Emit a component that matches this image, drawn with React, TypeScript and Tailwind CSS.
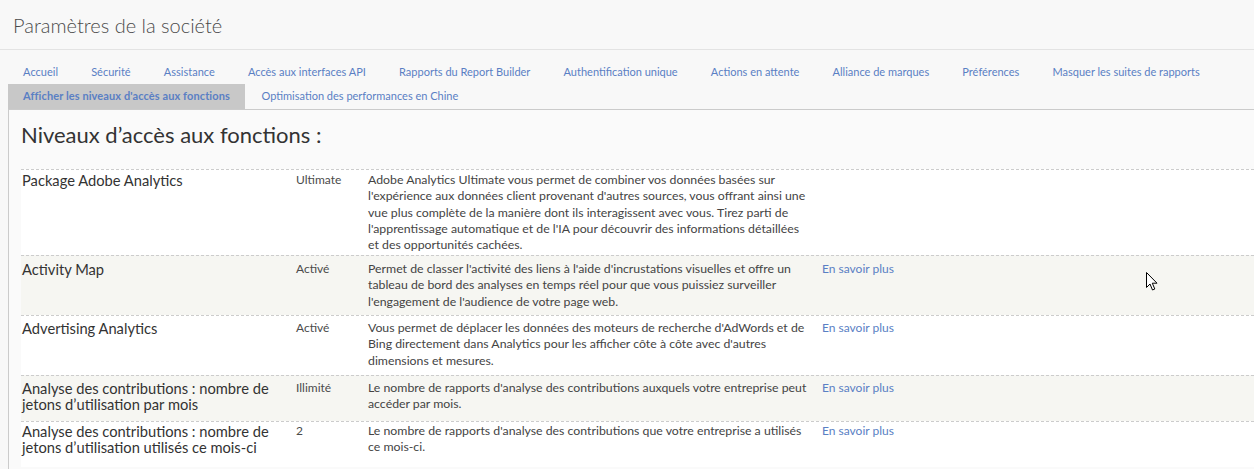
import React from "react";

const tabsTop = [
  "Accueil",
  "Sécurité",
  "Assistance",
  "Accès aux interfaces API",
  "Rapports du Report Builder",
  "Authentification unique",
  "Actions en attente",
  "Alliance de marques",
  "Préférences",
  "Masquer les suites de rapports",
];

const rows = [
  {
    name: "Package Adobe Analytics",
    value: "Ultimate",
    desc: [
      "Adobe Analytics Ultimate vous permet de combiner vos données basées sur",
      "l'expérience aux données client provenant d'autres sources, vous offrant ainsi une",
      "vue plus complète de la manière dont ils interagissent avec vous. Tirez parti de",
      "l'apprentissage automatique et de l'IA pour découvrir des informations détaillées",
      "et des opportunités cachées.",
    ],
    link: false,
    h: "h-[86px] pt-[2px]",
  },
  {
    name: "Activity Map",
    value: "Activé",
    desc: [
      "Permet de classer l'activité des liens à l'aide d'incrustations visuelles et offre un",
      "tableau de bord des analyses en temps réel pour que vous puissiez surveiller",
      "l'engagement de l'audience de votre page web.",
    ],
    link: true,
    h: "h-[60px] pt-[5px]",
  },
  {
    name: "Advertising Analytics",
    value: "Activé",
    desc: [
      "Vous permet de déplacer les données des moteurs de recherche d'AdWords et de",
      "Bing directement dans Analytics pour les afficher côte à côte avec d'autres",
      "dimensions et mesures.",
    ],
    link: true,
    h: "h-[60px] pt-[4px]",
  },
  {
    name: "Analyse des contributions : nombre de jetons d’utilisation par mois",
    value: "Illimité",
    desc: [
      "Le nombre de rapports d'analyse des contributions auxquels votre entreprise peut",
      "accéder par mois.",
    ],
    link: true,
    h: "h-[46px] pt-[4px]",
  },
  {
    name: "Analyse des contributions : nombre de jetons d’utilisation utilisés ce mois-ci",
    value: "2",
    desc: [
      "Le nombre de rapports d'analyse des contributions que votre entreprise a utilisés",
      "ce mois-ci.",
    ],
    link: true,
    h: "h-[46px] pt-[1px]",
  },
];

function Tab({ label, active }: { label: string; active?: boolean }) {
  return (
    <div
      className={
        active
          ? "h-[25px] px-[15px] flex items-center bg-[#c8c8c8] text-[#5a7fc4] font-bold tracking-[0.1px]"
          : "h-[25px] px-[16.6px] flex items-center text-[#5a7fc4]"
      }
    >
      {label}
    </div>
  );
}

export default function App() {
  return (
    <div className="relative min-h-[469px] bg-[#f8f8f8] font-['Lato',sans-serif] text-[#4b4b4b] overflow-hidden">
      {/* header */}
      <div className="h-[50px] border-b border-[#e3e3e3] pl-[13px] flex items-center text-[20px] text-[#4b4b4b] font-light">
        Paramètres de la société
      </div>

      {/* tabs */}
      <div className="pt-[9px] pl-[8px] text-[11px]">
        <div className="flex -ml-[1.5px] pt-[1px] h-[25px] items-center">
          {tabsTop.map((t) => (
            <Tab key={t} label={t} />
          ))}
        </div>
        <div className="flex">
          <Tab label="Afficher les niveaux d'accès aux fonctions" active />
          <Tab label="Optimisation des performances en Chine" />
        </div>
      </div>

      {/* panel */}
      <div className="ml-[8px] border-l border-t border-[#cbcbcb] bg-[#fafafa] pl-[12px] pb-[20px]">
        <h1 className="pt-[8px] h-[59px] text-[22px] text-[#333]">Niveaux d’accès aux fonctions :</h1>
        <div className="text-[12px] leading-[16.3px]">
          {rows.map((r, i) => (
            <div
              key={r.name}
              className={
                "flex border-t border-dashed border-[#cccccc] " +
                r.h +
                " " +
                (i % 2 === 1 ? "bg-[#f6f6f2]" : "bg-white")
              }
            >
              <div className="w-[275px] shrink-0 pl-[1px] pr-[6px] text-[14.7px] leading-[16px] text-[#333]">
                {r.name}
              </div>
              <div className="w-[72px] shrink-0">{r.value}</div>
              <div className="w-[440px] shrink-0 whitespace-nowrap text-[12.3px] text-[#444]">
                {r.desc.map((line) => (
                  <div key={line}>{line}</div>
                ))}
              </div>
              <div className="pl-[14px] text-[#5a7fc4]">{r.link ? "En savoir plus" : ""}</div>
            </div>
          ))}
        </div>
      </div>

      {/* mouse cursor */}
      <svg className="absolute left-[1146px] top-[272px]" width="12" height="19" viewBox="0 0 12 19">
        <path d="M0.5 0.5 L0.5 15.5 L4 12 L6.5 18 L8.8 17 L6.3 11.2 L11 11.2 Z" fill="white" stroke="black" strokeWidth="1" />
      </svg>
    </div>
  );
}
